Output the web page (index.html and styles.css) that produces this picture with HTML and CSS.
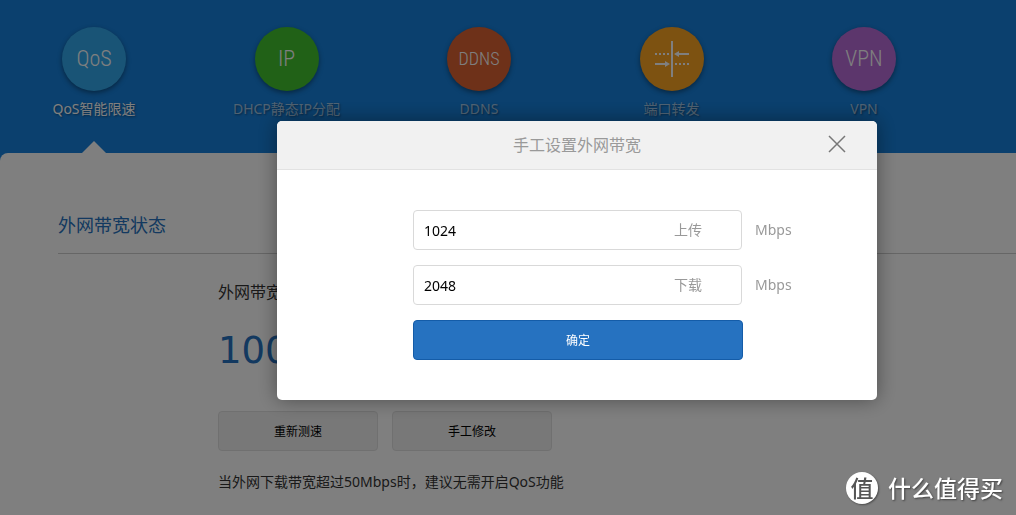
FILE: index.html
```html
<!DOCTYPE html>
<html lang="zh-CN">
<head>
<meta charset="utf-8">
<meta name="viewport" content="width=device-width, initial-scale=1">
<title>QoS智能限速</title>
<link rel="stylesheet" href="styles.css">
</head>
<body>
<header class="top">
  <nav class="tabs">
    <a class="tab tab-active" href="#qos"><span class="disc disc-qos">QoS</span><span>QoS智能限速</span></a>
    <a class="tab" href="#dhcp"><span class="disc disc-ip">IP</span><span>DHCP静态IP分配</span></a>
    <a class="tab" href="#ddns"><span class="disc disc-ddns">DDNS</span><span>DDNS</span></a>
    <a class="tab" href="#port"><span class="disc disc-port">
      <svg width="36" height="36" viewBox="0 0 36 36" fill="none" stroke="currentColor" stroke-width="2" aria-hidden="true">
        <path d="M18 0v36"/>
        <path d="M1 13h14M21 23h14" stroke-dasharray="2 2"/>
        <path d="M35 13H23M1 23h12"/>
        <path d="M20 13l5-3v6zM16 23l-5-3v6z" fill="currentColor" stroke="none"/>
      </svg></span><span>端口转发</span></a>
    <a class="tab" href="#vpn"><span class="disc disc-vpn">VPN</span><span>VPN</span></a>
  </nav>
</header>
<main class="panel">
  <h1 class="panel-title">外网带宽状态</h1>
  <section class="status">
    <p class="status-label">外网带宽</p>
    <p class="status-value">100</p>
    <div class="actions">
      <button class="btn" type="button">重新测速</button>
      <button class="btn" type="button">手工修改</button>
    </div>
    <p class="hint">当外网下载带宽超过50Mbps时，建议无需开启QoS功能</p>
  </section>
</main>
<div class="overlay">
  <section class="dialog" role="dialog" aria-modal="true" aria-labelledby="dialog-title">
    <header class="dialog-head">
      <h2 class="dialog-title" id="dialog-title">手工设置外网带宽</h2>
      <button class="close" type="button" aria-label="关闭">
        <svg width="18" height="18" viewBox="0 0 18 18" fill="none" stroke="currentColor" stroke-width="1.5" aria-hidden="true"><path d="M1 1l16 16M17 1L1 17"/></svg>
      </button>
    </header>
    <form class="form">
      <div class="row">
        <div class="field"><input class="input" id="up" type="text" value="1024"><label class="field-label" for="up">上传</label></div>
        <span class="unit">Mbps</span>
      </div>
      <div class="row">
        <div class="field"><input class="input" id="down" type="text" value="2048"><label class="field-label" for="down">下载</label></div>
        <span class="unit">Mbps</span>
      </div>
      <button class="submit" type="button">确定</button>
    </form>
  </section>
</div>
<div class="watermark"><span class="seal">值</span><span>什么值得买</span></div>
</body>
</html>
```

FILE: styles.css
```css
* { box-sizing: border-box; }
body {
  margin: 0;
  min-height: 100vh;
  display: flex;
  flex-direction: column;
  overflow: hidden;
  background: #1680dc;
  font: 14px/20px "Noto Sans", "Noto Sans CJK SC", sans-serif;
  color: #333;
}
h1, h2, p { margin: 0; font-weight: 400; }
button, input { font-family: inherit; }

.top { padding: 27px 92px 0 34px; }
.tabs { display: flex; justify-content: space-between; }
.tab {
  width: 120px;
  height: 126px;
  display: flex;
  flex-direction: column;
  align-items: center;
  gap: 8px;
  color: rgba(255, 255, 255, .6);
  text-decoration: none;
  white-space: nowrap;
  text-shadow: 1px 1px 2px rgba(0, 0, 0, .4);
}
.tab-active { color: #fff; }
.tab-active::after {
  content: "";
  margin-top: auto;
  border: 12px solid transparent;
  border-top: 0;
  border-bottom-color: #fff;
}
.disc {
  width: 64px;
  height: 64px;
  flex: none;
  display: flex;
  align-items: center;
  justify-content: center;
  border-radius: 50%;
  box-shadow: 0 2px 5px rgba(0, 0, 0, .4);
  color: #fff;
  text-shadow: none;
  font-family: "Roboto Condensed", "Open Sans Condensed", "Liberation Sans Narrow", Roboto, sans-serif;
  font-size: 22px;
  font-weight: 300;
}
.disc-qos { background: #33a9ec; }
.disc-ip { background: #42c22f; }
.disc-ddns { background: #dc6232; font-size: 18px; }
.disc-port { background: #faa423; }
.disc-vpn { background: #b86cd8; }

.panel {
  flex: 1;
  padding: 60px 0 20px 58px;
  border-top-left-radius: 8px;
  background: #fff;
}
.panel-title {
  padding-bottom: 16px;
  border-bottom: 1px solid #ccc;
  font-size: 18px;
  line-height: 24px;
  color: #2672c0;
}
.status { padding: 26px 0 0 160px; }
.status-label { font-size: 16px; line-height: 24px; }
.status-value {
  padding: 23px 0 36px;
  font-family: "DejaVu Sans", sans-serif;
  font-size: 37px;
  line-height: 48px;
  color: #2672c0;
}
.actions { display: flex; gap: 14px; }
.btn {
  width: 160px;
  height: 40px;
  border: 1px solid #e0e0e0;
  border-radius: 4px;
  background: #f1f1f1;
  font-size: 12px;
  color: #000;
}
.hint { padding-top: 21px; }

.overlay {
  position: fixed;
  inset: 0;
  display: flex;
  align-items: flex-start;
  justify-content: center;
  padding: 121px 0 0 138px;
  background: rgba(0, 0, 0, .5);
}
.dialog {
  width: 600px;
  border-radius: 5px;
  background: #fff;
  box-shadow: 0 0 20px rgba(0, 0, 0, .4);
  color: #999;
}
.dialog-head {
  display: grid;
  grid-template-columns: 48px 1fr 48px;
  align-items: center;
  padding: 0 16px;
  height: 49px;
  border-bottom: 1px solid #e2e2e2;
  border-radius: 5px 5px 0 0;
  background: #f1f1f1;
}
.dialog-title { grid-column: 2; text-align: center; font-size: 16px; line-height: 24px; }
.close {
  display: flex;
  align-items: center;
  justify-content: center;
  padding: 0 0 2px;
  height: 48px;
  border: 0;
  background: none;
  color: #777;
}
.form {
  display: flex;
  flex-direction: column;
  gap: 15px;
  padding: 40px 60px 40px 136px;
}
.row { display: flex; align-items: center; gap: 13px; }
.field {
  width: 329px;
  height: 40px;
  display: flex;
  align-items: center;
  padding-right: 39px;
  border: 1px solid #d9d9d9;
  border-radius: 4px;
}
.input {
  flex: 1;
  min-width: 0;
  height: 38px;
  padding: 0 10px;
  border: 0;
  background: none;
  outline: 0;
  font-size: 14px;
  color: #000;
}
.unit { font-size: 14px; }
.submit {
  width: 330px;
  height: 40px;
  border: 1px solid #145ca8;
  border-radius: 4px;
  background: #2672c0;
  font-size: 12px;
  color: #fff;
}

.watermark {
  position: fixed;
  right: 13px;
  bottom: 11px;
  display: flex;
  align-items: center;
  gap: 10px;
  color: #fff;
  font-size: 23px;
  line-height: 32px;
  font-weight: 500;
  text-shadow: 1px 1px 2px rgba(0, 0, 0, .5);
}
.seal {
  width: 32px;
  height: 32px;
  border-radius: 50%;
  background: #fff;
  box-shadow: 1px 1px 2px rgba(0, 0, 0, .4);
  text-align: center;
  color: #555;
  text-shadow: none;
}
```
